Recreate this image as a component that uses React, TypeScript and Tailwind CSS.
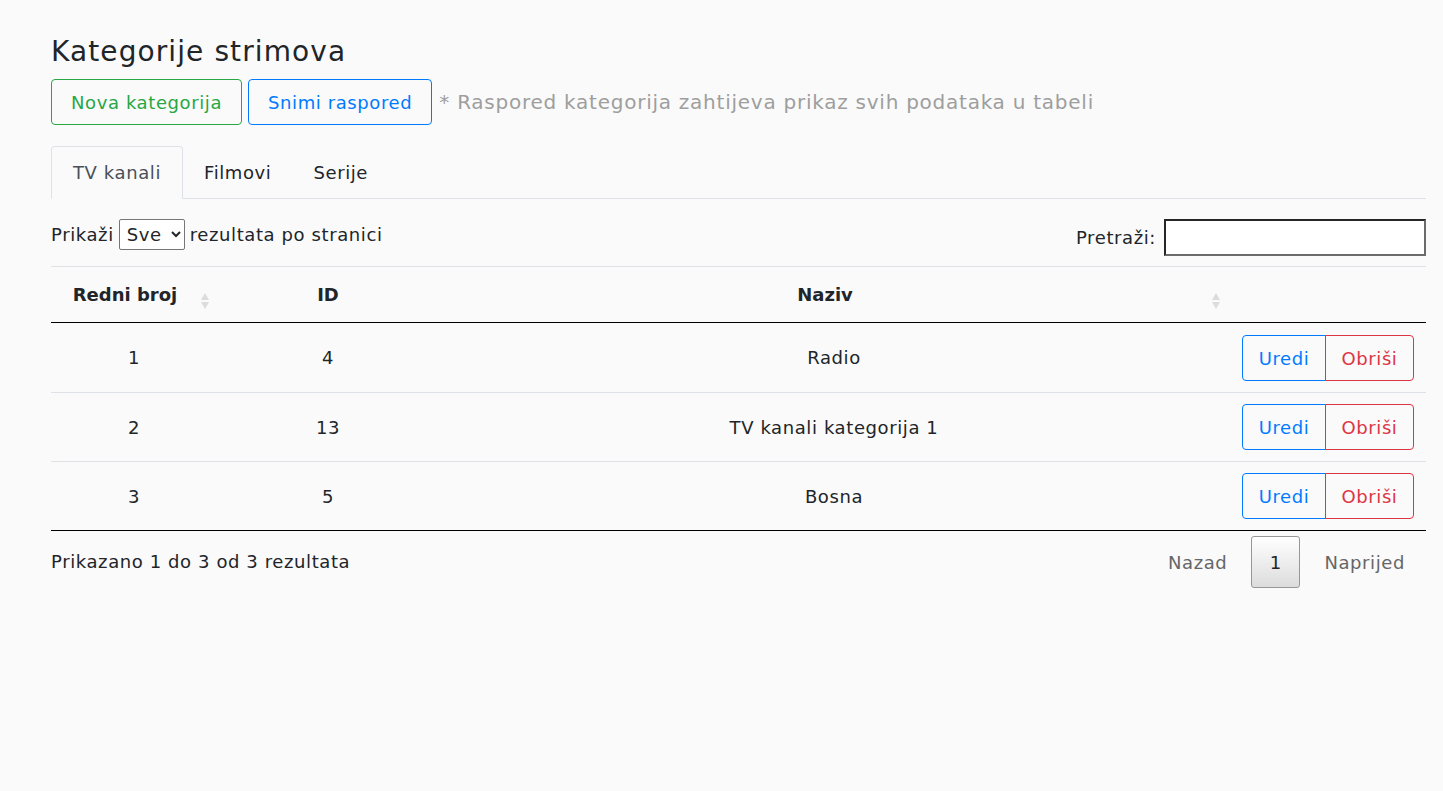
import React from "react";

const rows = [
  { n: 1, id: 4, name: "Radio" },
  { n: 2, id: 13, name: "TV kanali kategorija 1" },
  { n: 3, id: 5, name: "Bosna" },
];

function SortIcon() {
  return (
    <svg width="10" height="18" viewBox="0 0 10 18" className="inline-block">
      <path d="M5 1 L9 8 L1 8 Z" fill="#dcdcdc" />
      <path d="M5 17 L9 10 L1 10 Z" fill="#dcdcdc" />
    </svg>
  );
}

export default function App() {
  return (
    <div
      className="min-h-screen bg-[#fafafa] text-[#212529] pl-[51px] pr-[17px] pt-[32px] tracking-[0.6px]"
      style={{ fontFamily: "'DejaVu Sans', 'Noto Sans', sans-serif" }}
    >
      <h3 className="text-[28px] leading-[40px] font-normal tracking-[1.1px] mb-[7px]">Kategorije strimova</h3>

      <div className="flex items-center gap-[6px]">
        <button className="h-[46px] px-[19px] border border-[#28a745] text-[#28a745] rounded-[4px] text-[18px]">
          Nova kategorija
        </button>
        <button className="h-[46px] px-[19px] border border-[#007bff] text-[#007bff] rounded-[4px] text-[18px]">
          Snimi raspored
        </button>
        <span className="text-[20px] text-[#9e9e9e] ml-[1px] tracking-[0.75px]">
          * Raspored kategorija zahtijeva prikaz svih podataka u tabeli
        </span>
      </div>

      <div className="mt-[21px] flex border-b border-[#dee2e6] text-[18px]">
        <div className="h-[53px] px-[21px] flex items-center border border-[#dee2e6] border-b-[#fafafa] -mb-px rounded-t-[4px] text-[#495057]">
          TV kanali
        </div>
        <div className="h-[52px] px-[21px] flex items-center">Filmovi</div>
        <div className="h-[52px] px-[21px] flex items-center">Serije</div>
      </div>

      <div className="mt-[20px] flex justify-between items-start text-[18px]">
        <div className="flex items-center gap-[5px] h-[31px]">
          <span>Prikaži</span>
          <select className="h-[31px] w-[66px] border border-[#767676] rounded-[2px] bg-white text-[18px] px-[3px]">
            <option>Sve</option>
          </select>
          <span>rezultata po stranici</span>
        </div>
        <div className="flex items-center gap-[8px]">
          <span>Pretraži:</span>
          <input className="h-[37px] w-[262px] border-2 border-[#262626] border-r-[#6b6b6b] border-b-[#6b6b6b] bg-white" />
        </div>
      </div>

      <table className="mt-[10px] w-full border-collapse text-[18px] table-fixed">
        <colgroup>
          <col className="w-[166px]" />
          <col className="w-[222px]" />
          <col className="w-[790px]" />
          <col />
        </colgroup>
        <thead>
          <tr className="border-t border-[#dee2e6] border-b border-b-black">
            <th className="h-[56px] relative font-bold tracking-normal pr-[18px]">
              Redni broj
              <span className="absolute right-[7px] top-[19px]"><SortIcon /></span>
            </th>
            <th className="font-bold tracking-normal">ID</th>
            <th className="relative font-bold tracking-normal pr-[18px]">
              Naziv
              <span className="absolute right-[8px] top-[19px]"><SortIcon /></span>
            </th>
            <th></th>
          </tr>
        </thead>
        <tbody>
          {rows.map((r, i) => (
            <tr key={r.n} className={i < rows.length - 1 ? "border-b border-[#dee2e6]" : "border-b border-black"}>
              <td className="text-center">{r.n}</td>
              <td className="text-center">{r.id}</td>
              <td className="text-center">{r.name}</td>
              <td className={i === 0 ? "pt-[12px] pb-[11px] pr-[12px]" : "py-[11px] pr-[12px]"}>
                <div className="flex justify-end">
                  <button className="h-[46px] w-[84px] border border-[#007bff] text-[#007bff] rounded-l-[4px] text-[18px]">
                    Uredi
                  </button>
                  <button className="h-[46px] w-[89px] border border-[#dc3545] -ml-px text-[#dc3545] rounded-r-[4px] text-[18px]">
                    Obriši
                  </button>
                </div>
              </td>
            </tr>
          ))}
        </tbody>
      </table>

      <div className="flex justify-between items-start text-[18px] mt-[5px]">
        <div className="pt-[12px]">Prikazano 1 do 3 od 3 rezultata</div>
        <div className="flex items-center mr-[21px]">
          <span className="text-[#666] px-[24px]">Nazad</span>
          <span className="h-[52px] w-[49px] flex items-center justify-center border border-[#979797] rounded-[3px] bg-gradient-to-b from-white to-[#dcdcdc]">
            1
          </span>
          <span className="text-[#666] pl-[24px]">Naprijed</span>
        </div>
      </div>
    </div>
  );
}
